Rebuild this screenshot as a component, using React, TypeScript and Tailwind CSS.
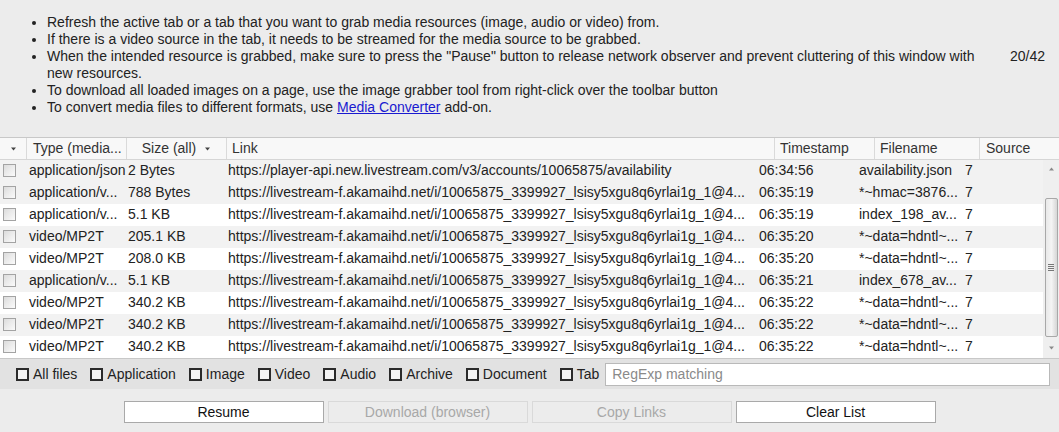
import React from "react";

const LINK = "https://livestream-f.akamaihd.net/i/10065875_3399927_lsisy5xgu8q6yrlai1g_1@4...";

const rows = [
  ["application/json", "2 Bytes", "https://player-api.new.livestream.com/v3/accounts/10065875/availability", "06:34:56", "availability.json", "7"],
  ["application/v...", "788 Bytes", LINK, "06:35:19", "*~hmac=3876...", "7"],
  ["application/v...", "5.1 KB", LINK, "06:35:19", "index_198_av...", "7"],
  ["video/MP2T", "205.1 KB", LINK, "06:35:20", "*~data=hdntl~...", "7"],
  ["video/MP2T", "208.0 KB", LINK, "06:35:20", "*~data=hdntl~...", "7"],
  ["application/v...", "5.1 KB", LINK, "06:35:21", "index_678_av...", "7"],
  ["video/MP2T", "340.2 KB", LINK, "06:35:22", "*~data=hdntl~...", "7"],
  ["video/MP2T", "340.2 KB", LINK, "06:35:22", "*~data=hdntl~...", "7"],
  ["video/MP2T", "340.2 KB", LINK, "06:35:22", "*~data=hdntl~...", "7"],
];

const filters = ["All files", "Application", "Image", "Video", "Audio", "Archive", "Document", "Tab"];

function FilterBox({ label }: { label: string }) {
  return (
    <label className="flex items-center gap-[4px] mr-[13px] whitespace-nowrap">
      <span className="w-[13px] h-[13px] border-2 border-[#2b2b2b] bg-[#f4f4f4]" />
      <span>{label}</span>
    </label>
  );
}

export default function App() {
  return (
    <div
      className="w-[1059px] h-[432px] flex flex-col bg-[#ececec] text-[14px] text-[#222] overflow-hidden"
      style={{ fontFamily: '"Liberation Sans", Arial, sans-serif' }}
    >
      {/* Instructions */}
      <div className="h-[137px] flex shrink-0">
        <ul className="list-disc pl-[47px] pt-[14px] w-[1000px] leading-[17px]">
          <li>Refresh the active tab or a tab that you want to grab media resources (image, audio or video) from.</li>
          <li>If there is a video source in the tab, it needs to be streamed for the media source to be grabbed.</li>
          <li>
            When the intended resource is grabbed, make sure to press the "Pause" button to release network observer and prevent cluttering of this window with new resources.
          </li>
          <li>To download all loaded images on a page, use the image grabber tool from right-click over the toolbar button</li>
          <li>
            To convert media files to different formats, use{" "}
            <a className="text-[#1a1ad0] underline">Media Converter</a> add-on.
          </li>
        </ul>
        <div className="pt-[48px] pl-[10px] leading-[17px]">20/42</div>
      </div>

      {/* Table */}
      <div className="border-t border-[#c8c8c8] bg-white shrink-0">
        <div className="h-[22px] flex bg-[#f8f8f8] border-b border-[#d6d6d6] text-[#333] leading-[21px]">
          <div className="w-[27px] border-r border-[#dadada] flex items-center justify-center">
            <svg width="7" height="4" viewBox="0 0 7 4"><path d="M1 0.5h5L3.5 3.5z" fill="#444" /></svg>
          </div>
          <div className="w-[100px] border-r border-[#dadada] pl-[6px] truncate">Type (media...</div>
          <div className="w-[100px] border-r border-[#dadada] flex items-center justify-center gap-[8px]">
            <span>Size (all)</span>
            <svg width="7" height="4" viewBox="0 0 7 4"><path d="M1 0.5h5L3.5 3.5z" fill="#444" /></svg>
          </div>
          <div className="w-[548px] border-r border-[#dadada] pl-[5px]">Link</div>
          <div className="w-[100px] border-r border-[#dadada] pl-[5px]">Timestamp</div>
          <div className="w-[105px] border-r border-[#dadada] pl-[5px]">Filename</div>
          <div className="flex-1 pl-[6px]">Source</div>
        </div>
        <div className="flex h-[198px]">
          <div className="flex-1 flex flex-col">
            {rows.map((r, i) => (
              <div
                key={i}
                className={`h-[22px] flex items-center pb-[2px] leading-[20px] ${i % 2 === 0 && i !== 0 ? "bg-white" : "bg-[#f2f2f2]"}`}
              >
                <div className="w-[27px] pl-[3px] flex items-center">
                  <span className="w-[13px] h-[13px] border border-[#a3a3a3] bg-gradient-to-br from-[#dcdcdc] to-[#fbfbfb]" />
                </div>
                <div className="w-[100px] pl-[2px] whitespace-nowrap overflow-hidden">{r[0]}</div>
                <div className="w-[100px] pl-[1px] whitespace-nowrap overflow-hidden">{r[1]}</div>
                <div className="w-[530px] pl-[1px] whitespace-nowrap overflow-hidden">{r[2]}</div>
                <div className="w-[100px] pl-[2px] whitespace-nowrap overflow-hidden">{r[3]}</div>
                <div className="w-[106px] pl-[2px] whitespace-nowrap overflow-hidden">{r[4]}</div>
                <div className="flex-1 pl-[2px]">{r[5]}</div>
              </div>
            ))}
          </div>
          {/* Scrollbar */}
          <div className="w-[16px] bg-[#efefef] flex flex-col items-center">
            <div className="h-[18px] flex items-center justify-center">
              <svg width="7" height="4" viewBox="0 0 7 4"><path d="M3.5 0.5L6 3.5H1z" fill="#8a8a8a" /></svg>
            </div>
            <div className="h-[20px]" />
            <div className="w-[13px] h-[139px] rounded-[2px] border border-[#a8a8a8] bg-gradient-to-r from-[#e9e9e9] via-[#f4f4f4] to-[#d6d6d6] flex flex-col items-center justify-center gap-[1px]">
              <span className="w-[6px] h-[1px] bg-[#777]" />
              <span className="w-[6px] h-[1px] bg-[#777]" />
              <span className="w-[6px] h-[1px] bg-[#777]" />
              <span className="w-[6px] h-[1px] bg-[#777]" />
            </div>
            <div className="flex-1 flex items-center justify-center">
              <svg width="7" height="4" viewBox="0 0 7 4"><path d="M1 0.5h5L3.5 3.5z" fill="#8a8a8a" /></svg>
            </div>
          </div>
        </div>
      </div>

      {/* Filters */}
      <div className="h-[31px] border-t border-[#c8c8c8] bg-[#e2e2e2] flex items-center pl-[16px] pr-[9px] shrink-0">
        {filters.map((f) => (
          <FilterBox key={f} label={f} />
        ))}
        <div className="flex-1 h-[23px] -ml-[7px] bg-white border border-[#b9b9b9] pl-[6px] flex items-center text-[#8a8a8a]">
          RegExp matching
        </div>
      </div>

      {/* Buttons */}
      <div className="flex-1 flex justify-center gap-[4px] pt-[12px]">
        <button className="w-[200px] h-[22px] bg-white border border-[#a9a9a9] text-[#111]">Resume</button>
        <button className="w-[200px] h-[22px] bg-[#ececec] border border-[#d9d9d9] text-[#a8a8a8]">Download (browser)</button>
        <button className="w-[200px] h-[22px] bg-[#ececec] border border-[#d9d9d9] text-[#a8a8a8]">Copy Links</button>
        <button className="w-[200px] h-[22px] bg-white border border-[#a9a9a9] text-[#111]">Clear List</button>
      </div>
    </div>
  );
}
